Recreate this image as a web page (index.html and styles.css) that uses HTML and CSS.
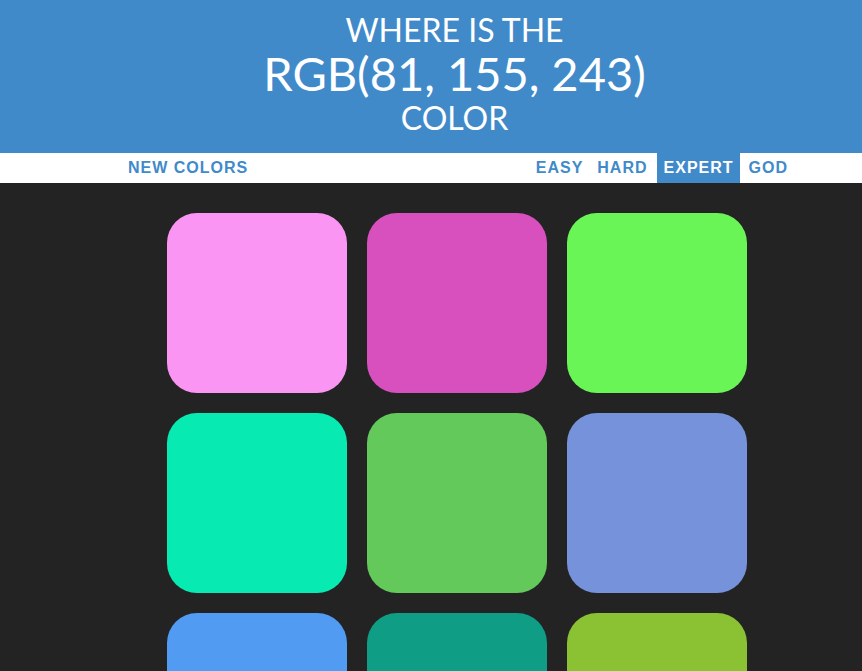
FILE: index.html
```html
<!DOCTYPE html>
<html>
<head>
<meta charset="utf-8">
<title>Color Game</title>
<link rel="stylesheet" href="styles.css">
</head>
<body>
<h1 class="title">
  <span class="title-line">WHERE IS THE</span>
  <span class="title-line title-rgb">RGB(81, 155, 243)</span>
  <span class="title-line">COLOR</span>
</h1>
<div class="stripe">
  <div class="stripe-inner">
    <button class="btn">NEW COLORS</button>
    <div class="modes">
      <button class="btn">EASY</button>
      <button class="btn">HARD</button>
      <button class="btn selected">EXPERT</button>
      <button class="btn">GOD</button>
    </div>
  </div>
</div>
<div class="board">
  <div class="square sq1"></div>
  <div class="square sq2"></div>
  <div class="square sq3"></div>
  <div class="square sq4"></div>
  <div class="square sq5"></div>
  <div class="square sq6"></div>
  <div class="square sq7"></div>
  <div class="square sq8"></div>
  <div class="square sq9"></div>
</div>
</body>
</html>
```
FILE: styles.css
```css
html, body {
  margin: 0;
  padding: 0;
}
body {
  background: #232323;
  font-family: Lato, "Liberation Sans", sans-serif;
  overflow: hidden;
}
.title {
  margin: 0;
  padding: 12px 0 18px 47px;
  background: #418aca;
  color: #fff;
  text-align: center;
  font-weight: normal;
  font-size: 32px;
  line-height: 1.1;
}
.title-line {
  display: block;
}
.title-rgb {
  font-size: 47px;
  line-height: 52.8px;
}
.stripe {
  background: #fff;
  height: 30px;
}
.stripe-inner {
  width: 673px;
  margin-left: 121px;
  display: flex;
  justify-content: space-between;
  height: 30px;
}
.modes {
  display: flex;
  gap: 1px;
}
.btn {
  border: none;
  background: #fff;
  color: #418aca;
  font-family: "Liberation Sans", Arial, sans-serif;
  font-weight: bold;
  font-size: 16px;
  letter-spacing: 1px;
  text-transform: uppercase;
  height: 30px;
  padding: 0 6px 0 7px;
  margin: 0;
  line-height: 30px;
  outline: none;
}
.btn.selected {
  background: #418aca;
  color: #fff;
  margin: 0 1px 0 2px;
}
.board {
  width: 600px;
  margin: 20px 0 0 157px;
  display: flex;
  flex-wrap: wrap;
}
.square {
  width: 180px;
  height: 180px;
  margin: 10px;
  border-radius: 30px;
}
.sq1 { background: #fb95f3; }
.sq2 { background: #d84fbe; }
.sq3 { background: #6af556; }
.sq4 { background: #07ebb3; }
.sq5 { background: #63c95a; }
.sq6 { background: #7592da; }
.sq7 { background: #519bf3; }
.sq8 { background: #0f9d85; }
.sq9 { background: #8bc234; }
```
